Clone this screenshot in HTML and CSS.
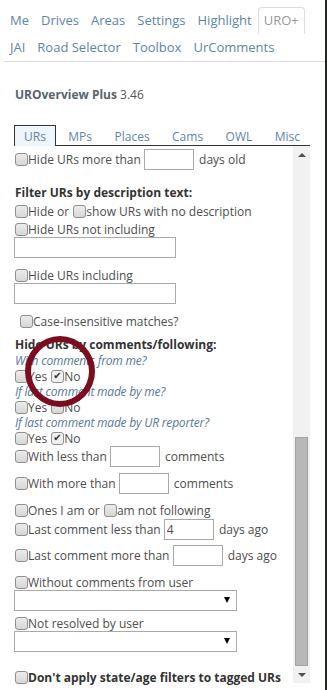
FILE: index.html
```html
<!DOCTYPE html>
<html lang="en">
<head>
    <meta charset="UTF-8">
    <meta name="viewport" content="width=device-width, initial-scale=1.0">
    <title>UROverview Plus</title>
    <link rel="stylesheet" href="styles.css">
</head>
<body>
    <div class="panel">
        <ul class="nav-tabs">
            <li><a href="#">Me</a></li>
            <li><a href="#">Drives</a></li>
            <li><a href="#">Areas</a></li>
            <li><a href="#">Settings</a></li>
            <li><a href="#">Highlight</a></li>
            <li class="active"><a href="#">URO+</a></li>
            <li><a href="#">JAI</a></li>
            <li><a href="#">Road Selector</a></li>
            <li><a href="#">Toolbox</a></li>
            <li><a href="#">UrComments</a></li>
        </ul>

        <section class="uro">
            <h3 class="uro-title"><b>UROverview Plus</b> 3.46</h3>

            <ul class="uro-tabs">
                <li class="active">URs</li>
                <li>MPs</li>
                <li>Places</li>
                <li>Cams</li>
                <li>OWL</li>
                <li>Misc</li>
            </ul>

            <div class="uro-body">
                <div class="uro-content">
                    <label class="field"><input type="checkbox">Hide URs more than <input type="text" class="num"> days old</label>

                    <h4 class="group">Filter URs by description text:</h4>
                    <div class="opt"><input type="checkbox">Hide or <input type="checkbox">show URs with no description</div>
                    <label class="opt"><input type="checkbox">Hide URs not including</label>
                    <input type="text" class="wide">
                    <label class="opt sep"><input type="checkbox">Hide URs including</label>
                    <input type="text" class="wide">
                    <label class="opt sep indent"><input type="checkbox">Case-insensitive matches?</label>

                    <h4 class="group second">Hide URs by comments/following:</h4>
                    <div class="qa">
                        <p class="q">With comments from me?</p>
                        <div class="yn"><input type="checkbox">Yes <input type="checkbox" checked>No</div>
                        <p class="q">If last comment made by me?</p>
                        <div class="yn"><input type="checkbox">Yes <input type="checkbox">No</div>
                        <p class="q">If last comment made by UR reporter?</p>
                        <div class="yn"><input type="checkbox">Yes <input type="checkbox" checked>No</div>
                    </div>

                    <label class="field"><input type="checkbox">With less than <input type="text" class="num"> comments</label>
                    <label class="field"><input type="checkbox">With more than <input type="text" class="num"> comments</label>
                    <div class="opt sep"><input type="checkbox">Ones I am or <input type="checkbox">am not following</div>
                    <label class="field tight"><input type="checkbox">Last comment less than <input type="text" class="num" value="4"> days ago</label>
                    <label class="field"><input type="checkbox">Last comment more than <input type="text" class="num"> days ago</label>

                    <label class="opt sep"><input type="checkbox">Without comments from user</label>
                    <div class="select"><select></select></div>
                    <label class="opt after-select"><input type="checkbox">Not resolved by user</label>
                    <div class="select"><select></select></div>

                    <label class="opt last"><input type="checkbox"><b>Don't apply state/age filters to tagged URs</b></label>

                    <span class="highlight-ring"></span>
                </div>

                <div class="scrollbar">
                    <span class="sb-btn up"></span>
                    <div class="sb-track"><span class="sb-thumb"></span></div>
                    <span class="sb-btn down"></span>
                </div>
            </div>
        </section>
    </div>
</body>
</html>
```

FILE: styles.css
```css
:root {
    --link: #5d84aa;
    --text: #4d4d4d;
    --heading: #333333;
    --italic: #5577a0;
    --border: #a9a9a9;
    --ring: #7b0d1e;
}

* {
    box-sizing: border-box;
}

body {
    margin: 0;
    background: #1d291f;
    font-family: 'Open Sans', 'Noto Sans', sans-serif;
    font-size: 12px;
    color: var(--text);
}

.panel {
    width: 325px;
    height: 690px;
    overflow: hidden;
    background: #fff;
}

/* top sidebar tabs */
.nav-tabs {
    display: flex;
    flex-wrap: wrap;
    list-style: none;
    margin: 0 0 0 4px;
    padding: 7px 0 0;
    border-bottom: 1px solid #dddddd;
}

.nav-tabs a {
    display: block;
    padding: 4px 5px;
    line-height: 17px;
    font-size: 13px;
    color: var(--link);
    text-decoration: none;
    border: 1px solid transparent;
    border-radius: 4px 4px 0 0;
}

.nav-tabs .active a {
    color: #999999;
    border-color: #dddddd;
    border-bottom-color: transparent;
    background: #fff;
}

/* script panel */
.uro {
    padding: 0 15px 0 14px;
}

.uro-title {
    margin: 25px 0 0 1px;
    font-size: 12px;
    font-weight: normal;
    line-height: 16px;
    color: #555;
}

.uro-title b {
    color: #59636d;
}

.uro-tabs {
    display: flex;
    justify-content: space-between;
    list-style: none;
    margin: 22px 0 0;
    padding: 0;
    border-bottom: 1px solid #333;
}

.uro-tabs li {
    padding: 1px 9px 0;
    line-height: 19px;
    color: var(--link);
    border: 1px solid transparent;
    border-bottom: none;
    margin-bottom: -1px;
}

.uro-tabs li.active {
    border-color: #333;
    background: #eef5fc;
    height: 21px;
}

.uro-body {
    display: flex;
    position: relative;
}

.uro-content {
    flex: 1;
    padding-top: 2px;
}

/* checkboxes */
input[type="checkbox"] {
    appearance: none;
    -webkit-appearance: none;
    width: 13px;
    height: 13px;
    margin: 0 0 0 1px;
    flex: none;
    border: 1px solid #8f8f8f;
    border-radius: 3px;
    background: linear-gradient(#ececec, #d6d6d6);
    position: relative;
    vertical-align: middle;
}

input[type="checkbox"]:checked {
    background: #f0f0f0;
}

input[type="checkbox"]:checked::before {
    content: "\2714";
    position: absolute;
    left: 1px;
    top: -2px;
    font-family: 'DejaVu Sans', sans-serif;
    font-size: 10px;
    line-height: 14px;
    color: #2e2e2e;
}

input[type="text"] {
    font: inherit;
    color: var(--text);
    border: 1px solid var(--border);
    height: 21px;
    padding: 0 2px;
    margin: 0;
    background: #fff;
}

input.num {
    width: 50px;
    margin: 0 2px 0 0;
}

input.wide {
    display: block;
    width: 162px;
}

/* rows */
.field {
    display: flex;
    align-items: center;
    height: 21px;
    white-space: pre;
}

.field:first-child {
    margin-top: 1px;
}

.field + .field {
    margin-top: 6px;
}

.field.tight {
    margin-top: 1px;
}

.field.tight + .field {
    margin-top: 5px;
}

.opt {
    display: flex;
    align-items: center;
    height: 16px;
    margin-top: 2px;
    white-space: pre;
}

.opt.sep {
    margin-top: 9px;
}

.field + .opt.sep {
    margin-top: 8px;
}

.opt.indent {
    padding-left: 5px;
}

.opt.after-select {
    margin-top: 4px;
}

.opt.last {
    margin-top: 17px;
}

.opt b {
    color: var(--heading);
}

.group {
    margin: 15px 0 0 1px;
    font-size: 12px;
    line-height: 16px;
    color: var(--heading);
}

.group.second {
    margin-top: 8px;
}

.qa {
    line-height: 15.5px;
}

.q {
    margin: 0 0 0 1px;
    font-style: italic;
    letter-spacing: -0.2px;
    color: var(--italic);
}

.yn {
    display: flex;
    align-items: center;
    height: 15.5px;
    white-space: pre;
}

.select {
    position: relative;
    width: 223px;
}

.select select {
    appearance: none;
    -webkit-appearance: none;
    display: block;
    width: 100%;
    height: 21px;
    border: 1px solid var(--border);
    border-radius: 0;
    background: #fff;
}

.select::after {
    content: "";
    position: absolute;
    right: 7px;
    top: 7px;
    border-left: 3.5px solid transparent;
    border-right: 3.5px solid transparent;
    border-top: 6px solid #000;
}

/* circle drawn over the screenshot */
.highlight-ring {
    position: absolute;
    left: 11px;
    top: 190px;
    width: 70px;
    height: 71px;
    border: 6px solid var(--ring);
    border-radius: 50%;
    pointer-events: none;
}

/* scrollbar */
.scrollbar {
    display: flex;
    flex-direction: column;
    width: 17px;
    height: 537px;
    flex: none;
    background: #f1f1f1;
}

.sb-btn {
    height: 17px;
    display: flex;
    align-items: center;
    justify-content: center;
}

.sb-btn::before {
    content: "";
    border-left: 4px solid transparent;
    border-right: 4px solid transparent;
}

.sb-btn.up::before {
    border-bottom: 4px solid #505050;
}

.sb-btn.down::before {
    border-top: 4px solid #505050;
}

.sb-track {
    flex: 1;
    display: flex;
    flex-direction: column;
    justify-content: flex-end;
    padding: 0 2px;
}

.sb-thumb {
    height: 229px;
    background: #b8b8b8;
    border: 1px solid #a3a3a3;
}
```
